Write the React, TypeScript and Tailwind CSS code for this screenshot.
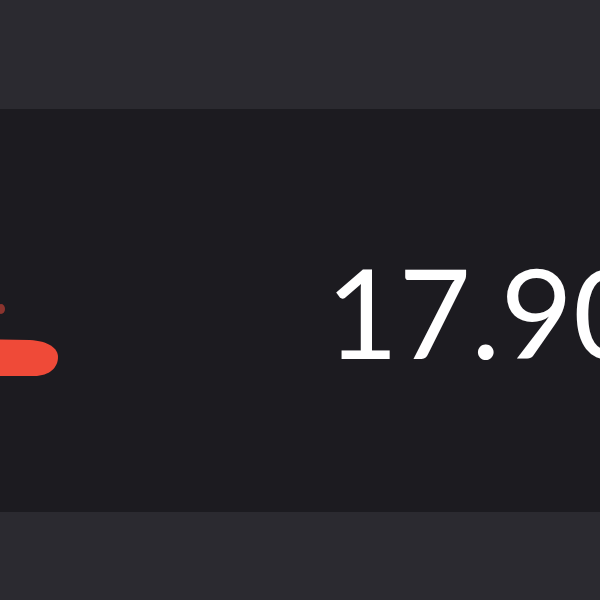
import React from 'react';

const App: React.FC = () => {
  return (
    <div className="w-[600px] h-[600px] flex flex-col bg-[#2b2a30] overflow-hidden">
      {/* top strip */}
      <div className="h-[109px] shrink-0 bg-[#2b2a30]" />

      {/* value row */}
      <div className="h-[403px] shrink-0 bg-[#1c1b20] flex items-center relative overflow-hidden">
        <svg className="absolute left-0 top-[190px]" width="70" height="90" viewBox="0 0 70 90">
          <ellipse cx="1" cy="10" rx="4" ry="5" fill="#e8493a" opacity="0.55" />
          <path d="M-20 40 L30 41 C48 42 58 49 58 58 C58 68 50 77 34 77 L-20 77 Z" fill="#ef4a38" />
        </svg>
        <span
          className="ml-[326px] mt-[2px] whitespace-nowrap text-white text-[125px] leading-none"
          style={{ fontFamily: 'Lato, sans-serif' }}
        >
          17.90
        </span>
      </div>

      {/* bottom strip */}
      <div className="flex-1 bg-[#2b2a30]" />
    </div>
  );
};

export default App;
